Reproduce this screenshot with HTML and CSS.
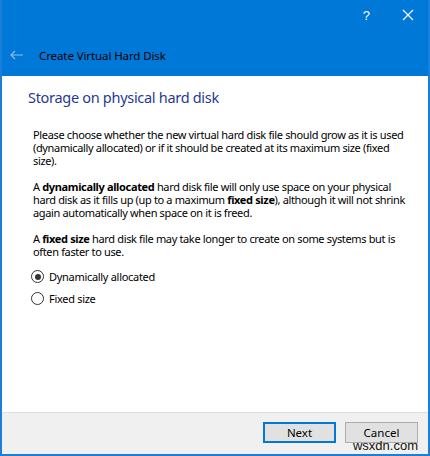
FILE: index.html
```html
<!DOCTYPE html>
<html>
<head>
<meta charset="utf-8">
<link rel="stylesheet" href="styles.css">
</head>
<body>
<div class="window">
  <div class="titlebar">
    <div class="controls">
      <span class="help">?</span>
      <span class="close">
        <svg width="12" height="12" viewBox="0 0 12 12"><path d="M1 1 L11 11 M11 1 L1 11" stroke="#fff" stroke-width="1.2" fill="none"/></svg>
      </span>
    </div>
    <div class="titlerow">
      <svg class="back" width="14" height="10" viewBox="0 0 14 10"><path d="M5 1 L1 5 L5 9 M1 5 H13" stroke="#8cbbe6" stroke-width="1.2" fill="none"/></svg>
      <span class="title">Create Virtual Hard Disk</span>
    </div>
  </div>
  <div class="content">
    <h1 class="heading">Storage on physical hard disk</h1>
    <p class="para">Please choose whether the new virtual hard disk file should grow as it is used<br>(dynamically allocated) or if it should be created at its maximum size (fixed<br>size).</p>
    <p class="para">A <b>dynamically allocated</b> hard disk file will only use space on your physical<br>hard disk as it fills up (up to a maximum <b>fixed size</b>), although it will not shrink<br>again automatically when space on it is freed.</p>
    <p class="para">A <b>fixed size</b> hard disk file may take longer to create on some systems but is<br>often faster to use.</p>
    <div class="options">
      <label class="option"><span class="radio checked"></span>Dynamically allocated</label>
      <label class="option"><span class="radio"></span>Fixed size</label>
    </div>
  </div>
  <div class="footer">
    <button class="btn default">Next</button>
    <button class="btn">Cancel</button>
    <span class="watermark">wsxdn.com</span>
  </div>
</div>
</body>
</html>
```
FILE: styles.css
```css
html, body {
  margin: 0;
  padding: 0;
}
body {
  width: 430px;
  height: 456px;
  overflow: hidden;
  font-family: "Noto Sans", "Open Sans", sans-serif;
}
.window {
  width: 430px;
  height: 456px;
  box-sizing: border-box;
  background: #0a78d7;
  border: 2px solid #1a7fdb;
  border-top: none;
  display: flex;
  flex-direction: column;
  position: relative;
}
.titlebar {
  height: 76px;
  background: #0078d7;
  display: flex;
  flex-direction: column;
}
.controls {
  display: flex;
  justify-content: flex-end;
  align-items: center;
  height: 32px;
  padding-right: 14px;
  gap: 32px;
  color: #fff;
}
.help {
  font-size: 13px;
  font-family: "Liberation Sans", sans-serif;
  margin-top: -1px;
}
.close {
  display: flex;
  margin-top: -2px;
}
.titlerow {
  display: flex;
  align-items: center;
  height: 44px;
  padding-left: 8px;
  padding-top: 2px;
  box-sizing: border-box;
}
.back {
  margin-right: 15px;
}
.title {
  font-size: 11.5px;
  color: #000;
  letter-spacing: -0.1px;
}
.content {
  flex: 1;
  background: #fff;
  padding: 10px 0 0 30px;
}
.heading {
  margin: 0 0 20px -4px;
  font-weight: normal;
  font-size: 14.5px;
  color: #1f3a93;
  letter-spacing: -0.3px;
  line-height: 22px;
}
.para {
  margin: 0 0 13px 1px;
  font-size: 11px;
  line-height: 13px;
  color: #000;
  letter-spacing: -0.35px;
  white-space: nowrap;
}
.para b {
  font-weight: bold;
}
.options {
  display: flex;
  flex-direction: column;
  gap: 9px;
  margin-top: -1px;
  margin-left: -1px;
}
.option {
  display: flex;
  align-items: center;
  font-size: 11px;
  line-height: 13px;
  letter-spacing: -0.3px;
}
.radio {
  width: 11px;
  height: 11px;
  border: 1px solid #333;
  border-radius: 50%;
  margin-right: 5px;
  position: relative;
  box-sizing: content-box;
}
.radio.checked::after {
  content: "";
  position: absolute;
  left: 2.5px;
  top: 2.5px;
  width: 6px;
  height: 6px;
  border-radius: 50%;
  background: #333;
}
.footer {
  height: 42px;
  background: #f0f0f0;
  border-top: 1px solid #dfdfdf;
  display: flex;
  justify-content: flex-end;
  align-items: flex-start;
  padding: 9px 10px 0 0;
  box-sizing: border-box;
  gap: 9px;
  position: relative;
}
.btn {
  width: 73px;
  height: 21px;
  background: #e1e1e1;
  border: 1px solid #adadad;
  font-family: "Noto Sans", sans-serif;
  font-size: 11.5px;
  color: #000;
  padding: 0;
  margin: 0;
  line-height: 17px;
}
.btn.default {
  border: 2px solid #0078d7;
}
.watermark {
  position: absolute;
  right: 10px;
  bottom: 1px;
  font-family: "Liberation Sans", sans-serif;
  font-size: 13px;
  color: #111;
}
```
